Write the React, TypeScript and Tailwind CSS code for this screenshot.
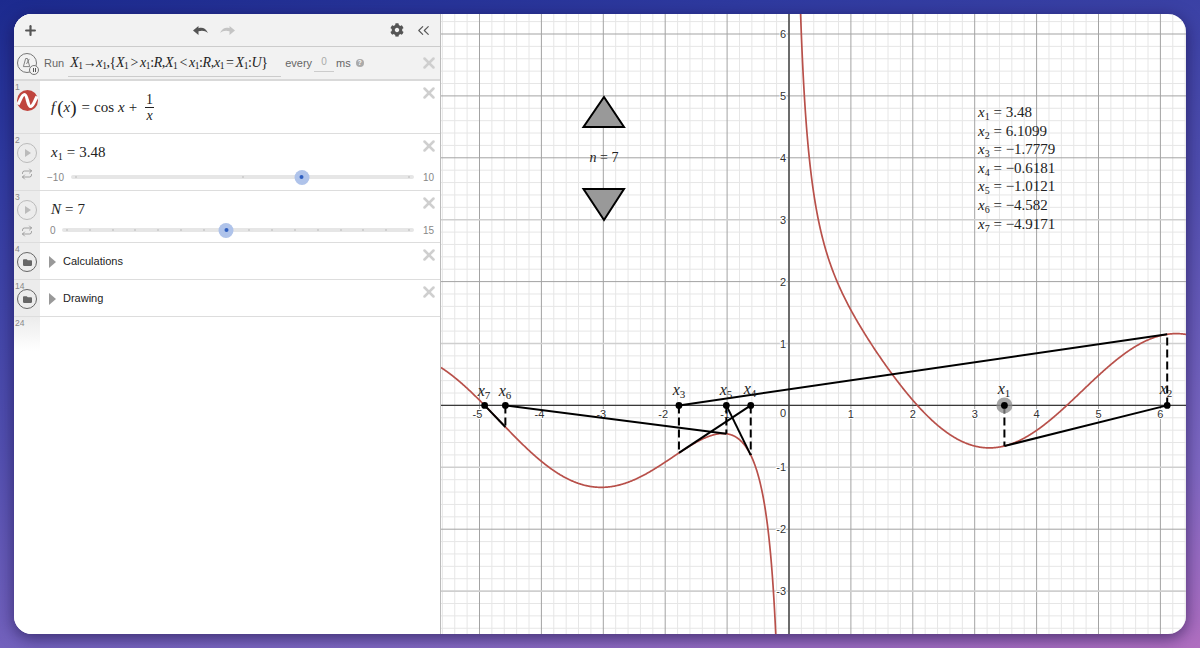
import { ChevronsLeft, Plus, Repeat, X } from "lucide-react";
import type { ReactNode } from "react";
import { FaCog, FaFolder } from "react-icons/fa";

const UNIT_X = 61.9;
const UNIT_Y = 61.9;
const X0 = 789;
const Y0 = 405.4;

const sx = (v: number) => X0 + v * UNIT_X;
const sy = (v: number) => Y0 - v * UNIT_Y;
const f = (x: number) => Math.cos(x) + 1 / x;

const LEFT = 441;
const RIGHT = 1186;
const TOP = 14;
const BOTTOM = 634;

const points = [3.48, 6.1099, -1.7779, -0.6181, -1.0121, -4.582, -4.9171];

const labels: [number, number, number][] = [
  [1, 1004, 394],
  [2, 1166, 394],
  [3, 679, 395],
  [4, 750, 394],
  [5, 726, 395],
  [6, 505, 396],
  [7, 484, 396],
];

const values = ["3.48", "6.1099", "−1.7779", "−0.6181", "−1.0121", "−4.582", "−4.9171"];

function curve(from: number, to: number) {
  const out: string[] = [];
  for (let px = from; px <= to; px += 0.5) {
    const y = sy(f((px - X0) / UNIT_X));
    if (y < TOP - 200 || y > BOTTOM + 200) continue;
    out.push(`${out.length ? "L" : "M"}${px} ${y.toFixed(2)}`);
  }
  return out.join(" ");
}

function range(a: number, b: number) {
  const out: number[] = [];
  for (let i = a; i <= b; i++) out.push(i);
  return out;
}

function Graph() {
  const minorX = range(-30, 35).filter((i) => i % 5 !== 0);
  const minorY = range(-20, 35).filter((i) => i % 5 !== 0);
  const fadedY = [3, 1, -1, -3];

  return (
    <svg
      viewBox={`${LEFT} ${TOP} ${RIGHT - LEFT} ${BOTTOM - TOP}`}
      className="h-full w-full"
      style={{ fontFamily: '"Liberation Serif", serif' }}
    >
      {minorX.map((i) => (
        <line key={i} x1={sx(i / 5)} x2={sx(i / 5)} y1={TOP} y2={BOTTOM} stroke="#e6e6e6" />
      ))}
      {minorY.map((i) => (
        <line key={i} y1={sy(i / 5)} y2={sy(i / 5)} x1={LEFT} x2={RIGHT} stroke="#e6e6e6" />
      ))}
      {range(-6, 7).map((i) => (
        <line key={i} x1={sx(i)} x2={sx(i)} y1={TOP} y2={BOTTOM} stroke="#a3a3a3" />
      ))}
      {range(-3, 6).map((i) => (
        <line
          key={i}
          y1={sy(i)}
          y2={sy(i)}
          x1={LEFT}
          x2={RIGHT}
          stroke={fadedY.includes(i) ? "#cfcfcf" : "#a3a3a3"}
          strokeWidth={fadedY.includes(i) ? 1.6 : 1}
        />
      ))}
      <line x1={X0} x2={X0} y1={TOP} y2={BOTTOM} stroke="#4a4a4a" strokeWidth={1.5} />
      <line y1={Y0} y2={Y0} x1={LEFT} x2={RIGHT} stroke="#3a3a3a" strokeWidth={1.4} />

      {[-5, -4, -3, -2, -1, 1, 2, 3, 4, 5, 6].map((i) => (
        <text
          key={i}
          x={sx(i) - (i < 0 ? 2 : 0)}
          y={418}
          textAnchor="middle"
          fontSize={11}
          fill="#333"
          stroke="#fff"
          strokeWidth={2}
          paintOrder="stroke"
          style={{ fontFamily: '"Liberation Sans", sans-serif' }}
        >
          {i}
        </text>
      ))}
      <text x={783} y={417} textAnchor="middle" fontSize={11} fill="#333" style={{ fontFamily: '"Liberation Sans", sans-serif' }}>
        0
      </text>
      {[-3, -2, -1, 1, 2, 3, 4, 5, 6].map((i) => (
        <text
          key={i}
          x={786}
          y={sy(i) + 4}
          textAnchor="end"
          fontSize={11}
          fill="#333"
          stroke="#fff"
          strokeWidth={2}
          paintOrder="stroke"
          style={{ fontFamily: '"Liberation Sans", sans-serif' }}
        >
          {i}
        </text>
      ))}

      <path d={curve(LEFT, X0 - 1)} fill="none" stroke="#b8504a" strokeWidth={1.7} />
      <path d={curve(X0 + 1, RIGHT)} fill="none" stroke="#b8504a" strokeWidth={1.7} />

      {points.map((p, i) => {
        const next = points[i + 1];
        return (
          <g key={p} stroke="#000" strokeWidth={2}>
            <line x1={sx(p)} x2={sx(p)} y1={Y0} y2={sy(f(p))} strokeDasharray="8 4" />
            {next !== undefined && <line x1={sx(p)} y1={sy(f(p))} x2={sx(next)} y2={Y0} />}
          </g>
        );
      })}

      <circle cx={sx(3.48)} cy={Y0} r={8} fill="#8a8a8a" fillOpacity={0.75} />
      {points.map((p) => (
        <circle key={p} cx={sx(p)} cy={Y0} r={3.4} fill="#000" />
      ))}

      {labels.map(([n, x, y]) => (
        <text key={n} x={x} y={y} textAnchor="middle" fontSize={16} fontStyle="italic" fill="#222">
          x
          <tspan dy={3} fontSize={11} fontStyle="normal">
            {n}
          </tspan>
        </text>
      ))}

      <path d="M604 97 L624 127 H583.5 Z" fill="#999" stroke="#000" strokeWidth={2} />
      <path d="M604 220 L624 189 H583.5 Z" fill="#999" stroke="#000" strokeWidth={2} />
      <text x={604} y={162} textAnchor="middle" fontSize={14} fill="#222">
        <tspan fontStyle="italic">n</tspan> = 7
      </text>

      {values.map((v, i) => (
        <text key={v} x={978} y={117 + i * 18.6} fontSize={15} fill="#222">
          <tspan fontStyle="italic">x</tspan>
          <tspan dy={3} fontSize={10}>
            {i + 1}
          </tspan>
          <tspan dy={-3}> = {v}</tspan>
        </text>
      ))}
    </svg>
  );
}

function CloseButton({ className }: { className: string }) {
  return <X size={18} strokeWidth={3.4} className={`shrink-0 text-[#cfcfcf] ${className}`} />;
}

function Var({ children }: { children: ReactNode }) {
  return <i className="italic">{children}</i>;
}

function Sub({ v, n }: { v: string; n: number }) {
  return (
    <span className="whitespace-nowrap">
      <Var>{v}</Var>
      <sub className="text-[0.68em]">{n}</sub>
    </span>
  );
}

function Arrow({ flip, color }: { flip?: boolean; color: string }) {
  return (
    <svg width="15" height="11" viewBox="0 0 15 11" className={flip ? "-scale-x-100" : ""}>
      <path d="M0 5.5 L5.5 1 V3.2 C9.5 2 13 3.5 15 8 C12 5.6 9 5.2 5.5 6.3 V10 Z" fill={color} />
    </svg>
  );
}

function PlayCircle() {
  return (
    <div className="flex h-5 w-5 items-center justify-center rounded-full border-[1.5px] border-[#bbbbbb]">
      <div className="ml-0.5 h-0 w-0 border-y-4 border-l-[6px] border-y-transparent border-l-[#bbbbbb]" />
    </div>
  );
}

function Gutter({ num, children }: { num: number; children?: ReactNode }) {
  return (
    <div className="flex w-[26px] shrink-0 flex-col items-center bg-[#ececec]">
      <span className="self-start pl-px pt-0.5 text-[8.5px] leading-[9px] text-[#888]">{num}</span>
      <div className="-mt-[2px] flex flex-col items-center">{children}</div>
    </div>
  );
}

function SliderRow({
  num,
  min,
  max,
  pct,
  rowClass,
  sliderClass,
  minClass,
  ticks,
  children,
}: {
  num: number;
  min: string;
  max: string;
  pct: number;
  rowClass: string;
  sliderClass: string;
  minClass: string;
  ticks: number;
  children: ReactNode;
}) {
  return (
    <div className={`flex border-b border-[#dddddd] ${rowClass}`}>
      <Gutter num={num}>
        <PlayCircle />
        <Repeat size={12} strokeWidth={1.5} className="mt-[5px] text-[#888]" />
      </Gutter>
      <div className="flex min-w-0 flex-1 flex-col">
        <div className="flex items-start justify-between">
          <div className="flex items-center pl-[11px] pt-[7px] font-['Liberation_Serif',serif] text-[15px] leading-[22px] text-[#222]">
            {children}
          </div>
          <CloseButton className="mt-[3px] mr-[2px]" />
        </div>
        <div className={`flex h-[16px] items-center pl-[7px] text-[10px] text-[#888] ${sliderClass}`}>
          <span className={minClass}>{min}</span>
          <div className="relative h-1 flex-1 rounded-full bg-[#e6e6e6]">
            <div className="flex h-full items-center justify-between px-1">
              {range(0, ticks).map((i) => (
                <span key={i} className="h-0.5 w-0.5 rounded-full bg-[#c8c8c8]" />
              ))}
            </div>
            <div
              className="absolute -top-[5.5px] flex h-[15px] w-[15px] -translate-x-1/2 items-center justify-center rounded-full bg-[#afc3ea]"
              style={{ left: `${pct}%` }}
            >
              <span className="h-1 w-1 rounded-full bg-[#2f5fc0]" />
            </div>
          </div>
          <span className="w-[26px] pl-[9px]">{max}</span>
        </div>
      </div>
    </div>
  );
}

function FolderRow({ num, label }: { num: number; label: string }) {
  return (
    <div className="flex h-[37px] border-b border-[#dddddd]">
      <Gutter num={num}>
        <div className="flex h-5 w-5 items-center justify-center rounded-full border-[1.5px] border-[#666]">
          <FaFolder size={9} className="text-[#666]" />
        </div>
      </Gutter>
      <div className="flex flex-1 items-start justify-between">
        <div className="flex items-center gap-[7px] pl-[9px] pt-[11px]">
          <div className="h-0 w-0 border-y-[6px] border-l-[7px] border-y-transparent border-l-[#999]" />
          <span className="text-[11px] leading-[15px] text-[#222]">{label}</span>
        </div>
        <CloseButton className="mt-[3px] mr-[2px]" />
      </div>
    </div>
  );
}

function Ticker() {
  return (
    <div className="flex h-[34px] items-center border-b-2 border-[#d9d9d9] bg-[#f2f2f2] pl-[3px]">
      <div className="relative h-5 w-5 shrink-0 rounded-full border-[1.5px] border-[#777]">
        <svg viewBox="0 0 20 20" className="h-full w-full">
          <path d="M6 14 L8.5 5 H10.5 L13 14 Z M9.5 11 L12.5 5.5" fill="none" stroke="#777" strokeWidth={1} />
        </svg>
        <span className="absolute -bottom-[3px] -right-[3px] flex h-[10px] w-[10px] items-center justify-center gap-px rounded-full border border-[#777] bg-[#f2f2f2]">
          <span className="h-1 w-px bg-[#555]" />
          <span className="h-1 w-px bg-[#555]" />
        </span>
      </div>
      <span className="ml-[7px] text-[11px] text-[#666]">Run</span>
      <div className="ml-[4px] flex h-[27px] w-[213px] items-center whitespace-nowrap border-b border-[#cccccc] pl-0.5 font-['Liberation_Serif',serif] text-[14px] tracking-[-0.4px] text-[#222]">
        <Sub v="X" n={1} />→<Sub v="x" n={1} />,{"{"}
        <Sub v="X" n={1} />
        <span className="mx-[2px]">&gt;</span>
        <Sub v="x" n={1} />:<Var>R</Var>,<Sub v="X" n={1} />
        <span className="mx-[2px]">&lt;</span>
        <Sub v="x" n={1} />:<Var>R</Var>,<Sub v="x" n={1} />
        <span className="mx-[2px]">=</span>
        <Sub v="X" n={1} />:<Var>U</Var>
        {"}"}
      </div>
      <span className="ml-1 text-[11px] text-[#666]">every</span>
      <span className="ml-[2px] h-[18px] w-5 border-b border-[#cccccc] text-center text-[10px] leading-[16px] text-[#aaa]">
        0
      </span>
      <span className="ml-[2px] text-[11px] text-[#666]">ms</span>
      <span className="ml-[5px] flex h-2 w-2 items-center justify-center rounded-full bg-[#aaa] text-[6.5px] font-bold text-white">
        ?
      </span>
      <div className="flex-1" />
      <CloseButton className="mr-[2px]" />
    </div>
  );
}

function Panel() {
  return (
    <div className="flex h-full w-[427px] shrink-0 flex-col border-r border-[#bbbbbb] bg-white">
      <div className="flex h-[33px] shrink-0 items-center border-b border-[#cccccc] bg-[#f2f2f2] pl-[9px] pr-[7px]">
        <Plus size={15} strokeWidth={3.5} className="text-[#555]" />
        <div className="ml-[155px] flex items-center gap-3">
          <Arrow color="#555" />
          <Arrow flip color="#c4c4c4" />
        </div>
        <div className="flex-1" />
        <FaCog size={14} className="text-[#555]" />
        <ChevronsLeft size={19} strokeWidth={1.4} className="ml-[10px] text-[#555]" />
      </div>
      <Ticker />

      <div className="flex h-[53px] border-b border-[#dddddd]">
        <Gutter num={1}>
          <svg width="21" height="21" viewBox="0 0 21 21">
            <circle cx="10.5" cy="10.5" r="10.5" fill="#c0453e" />
            <path d="M1 14.5 C4 9 5 4.5 7.5 4.5 C10.5 4.5 10.5 16.5 13.5 16.5 C16 16.5 17 12 20 6.5" fill="none" stroke="#fff" strokeWidth="3.2" />
          </svg>
        </Gutter>
        <div className="flex flex-1 items-start justify-between">
          <div className="flex items-center pl-[11px] pt-[11px] font-['Liberation_Serif',serif] text-[15px] text-[#222]">
            <Var>f</Var>
            <span className="ml-[2px] text-[19px] leading-none">(</span>
            <Var>x</Var>
            <span className="text-[19px] leading-none">)</span>
            <span className="ml-[5px]">=</span>
            <span className="ml-[4px]">cos</span>
            <span className="ml-1">
              <Var>x</Var>
            </span>
            <span className="ml-1">+</span>
            <span className="ml-2 inline-flex flex-col items-center text-[14px] leading-[15px]">
              <span className="w-[9px] border-b border-[#222] text-center">1</span>
              <Var>x</Var>
            </span>
          </div>
          <CloseButton className="mt-[3px] mr-[2px]" />
        </div>
      </div>

      <SliderRow
        num={2}
        min="−10"
        max="10"
        pct={67.3}
        rowClass="h-[57px]"
        sliderClass="mt-[6px]"
        minClass="w-[24px]"
        ticks={2}
      >
        <Sub v="x" n={1} />
        <span className="mx-[4px]">=</span>3.48
      </SliderRow>
      <SliderRow
        num={3}
        min="0"
        max="15"
        pct={46.6}
        rowClass="h-[52px]"
        sliderClass="mt-[2px]"
        minClass="w-[15px] pl-[3px]"
        ticks={15}
      >
        <Var>N</Var>
        <span className="mx-[4px]">=</span>7
      </SliderRow>
      <FolderRow num={4} label="Calculations" />
      <FolderRow num={14} label="Drawing" />

      <div className="flex h-[34px]">
        <div className="w-[26px] bg-gradient-to-b from-[#ececec] to-white pl-px pt-0.5 text-[8.5px] leading-[9px] text-[#888]">
          24
        </div>
      </div>
    </div>
  );
}

export default function App() {
  return (
    <div className="h-[648px] w-[1200px] overflow-hidden bg-[linear-gradient(168deg,#1c2a8e_0%,#2f3aa0_18%,#5350b0_50%,#7f68c2_80%,#b06ec0_100%)] p-[14px] font-['Liberation_Sans',sans-serif]">
      <div className="flex h-full w-full overflow-hidden rounded-[18px] bg-white shadow-[0_4px_16px_rgba(20,10,60,0.6)]">
        <Panel />
        <div className="min-w-0 flex-1">
          <Graph />
        </div>
      </div>
    </div>
  );
}
